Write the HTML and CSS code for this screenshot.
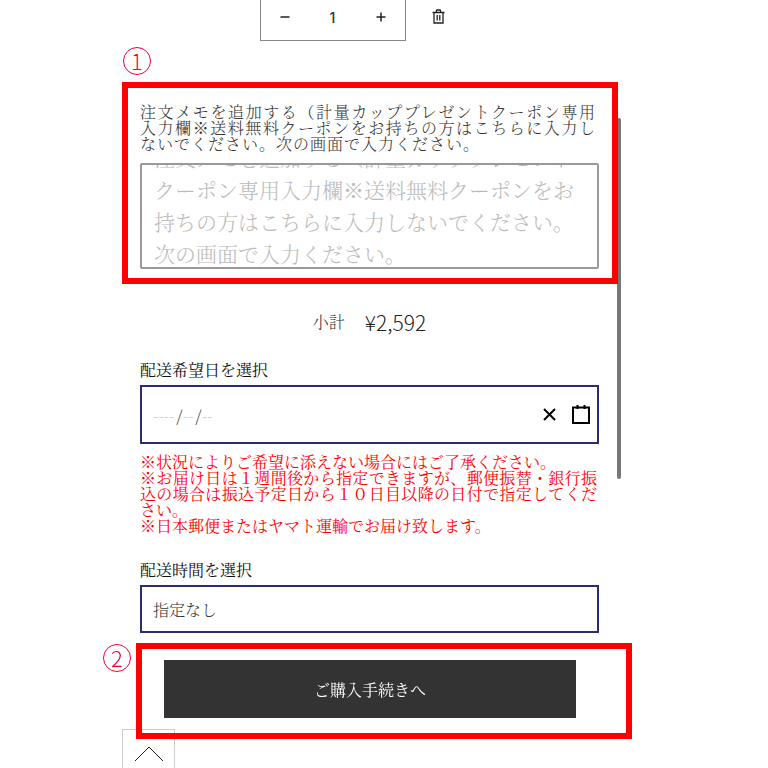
FILE: index.html
```html
<!DOCTYPE html>
<html lang="ja">

<head>
    <meta charset="UTF-8">
    <meta name="viewport" content="width=device-width, initial-scale=1.0">
    <title>カート</title>
    <link rel="stylesheet" href="styles.css">
</head>

<body>
    <main class="cart">
        <div class="cart-item">
            <div class="quantity">
                <button type="button" class="quantity-btn" aria-label="数量を減らす">
                    <svg width="10" height="10" viewBox="0 0 10 10"><path d="M0.5 5h9" /></svg>
                </button>
                <input class="quantity-input" type="text" value="1" aria-label="数量">
                <button type="button" class="quantity-btn" aria-label="数量を増やす">
                    <svg width="10" height="10" viewBox="0 0 10 10"><path d="M0.5 5h9M5 0.5v9" /></svg>
                </button>
            </div>
            <button type="button" class="remove-btn" aria-label="削除">
                <svg width="13" height="15" viewBox="0 0 13 15">
                    <path d="M0.5 3.5h12M4 3.5L4.8 1h3.4L9 3.5M2 3.5V14h9V3.5M5.2 6v5.5M7.8 6v5.5" />
                </svg>
            </button>
        </div>

        <!-- 注文メモ -->
        <section class="frame frame-note">
            <span class="badge badge-note">1</span>
            <label class="note-label" for="note">注文メモを追加する（計量カッププレゼントクーポン専用入力欄※送料無料クーポンをお持ちの方はこちらに入力しないでください。次の画面で入力ください。</label>
            <div class="note-box">
                <textarea class="note-input" id="note" placeholder="注文メモを追加する（計量カッププレゼントクーポン専用入力欄※送料無料クーポンをお持ちの方はこちらに入力しないでください。次の画面で入力ください。"></textarea>
            </div>
        </section>

        <section class="details">
            <div class="subtotal">
                <span class="subtotal-label">小計</span>
                <span class="subtotal-price">¥2,592</span>
            </div>

            <!-- 配送希望日 -->
            <label class="field-label" for="year">配送希望日を選択</label>
            <div class="field date-field">
                <input class="date-part year" id="year" type="text" placeholder="----">
                <span class="slash">/</span>
                <input class="date-part" type="text" placeholder="--" aria-label="月">
                <span class="slash">/</span>
                <input class="date-part" type="text" placeholder="--" aria-label="日">
                <div class="date-actions">
                    <button type="button" class="icon-btn" aria-label="クリア">
                        <svg width="13" height="13" viewBox="0 0 13 13"><path d="M1 1l11 11M12 1L1 12" /></svg>
                    </button>
                    <button type="button" class="icon-btn" aria-label="カレンダー">
                        <svg width="18" height="19" viewBox="0 0 18 19"><path d="M1 2.5h16V18H1zM5.5 0v4M12.5 0v4" /></svg>
                    </button>
                </div>
            </div>
            <p class="notice">
                ※状況によりご希望に添えない場合にはご了承ください。<br>
                ※お届け日は１週間後から指定できますが、郵便振替・銀行振込の場合は振込予定日から１０日目以降の日付で指定してください。<br>
                ※日本郵便またはヤマト運輸でお届け致します。
            </p>

            <!-- 配送時間 -->
            <label class="field-label" for="time">配送時間を選択</label>
            <select class="field time-select" id="time">
                <option>指定なし</option>
            </select>
        </section>

        <section class="frame frame-checkout">
            <span class="badge badge-checkout">2</span>
            <button type="submit" class="checkout-btn">ご購入手続きへ</button>
        </section>

        <div class="scroll-thumb"></div>
        <a class="page-top" href="#" aria-label="ページの先頭へ">
            <svg width="30" height="16" viewBox="0 0 30 16"><path d="M1 15L15 1l14 14" /></svg>
        </a>
    </main>
</body>

</html>
```

FILE: styles.css
```css
* {
    margin: 0;
    padding: 0;
    box-sizing: border-box;
}

body {
    background: #fff;
    color: #333;
    font-family: "Noto Serif CJK JP", "Noto Sans CJK JP", serif;
    font-size: 16px;
    font-weight: 300;
}

button,
input,
select,
textarea {
    font: inherit;
    color: inherit;
    background: none;
    border: none;
    border-radius: 0;
    outline: none;
}

button {
    cursor: pointer;
}

svg {
    display: block;
    fill: none;
    stroke: #222;
}

.cart {
    position: relative;
    padding: 0 150px 0 122px;
}

.cart-item {
    display: flex;
    justify-content: center;
    gap: 20px;
    padding-left: 100px;
    padding-right: 130px;
    height: 41px;
}

.quantity {
    display: grid;
    grid-template-columns: repeat(3, 48px);
    padding-bottom: 6px;
    border: 1px solid #888;
    border-top: none;
}

.quantity-btn {
    display: flex;
    align-items: center;
    justify-content: center;
}

.quantity-btn svg {
    stroke-width: 1.5;
}

.quantity-input {
    width: 48px;
    text-align: center;
    font-family: Inter, sans-serif;
    font-size: 14px;
    font-weight: 500;
}

.remove-btn {
    padding: 0 6px 8px;
}

.remove-btn svg {
    stroke-width: 1.3;
}

/* 赤枠 */
.frame {
    position: relative;
    z-index: 2;
    border: 6px solid #f00;
}

.frame-note {
    margin-top: 41px;
    padding: 16px 13px 9px 12px;
}

.frame-checkout {
    margin: 10px -14px 0 14px;
    padding: 11px 50px 15px 22px;
}

.badge {
    position: absolute;
    width: 28px;
    height: 28px;
    border: 1px solid #f0003c;
    border-radius: 50%;
    color: #f0003c;
    font-family: "Noto Sans CJK JP", sans-serif;
    font-size: 22px;
    line-height: 25px;
    text-align: center;
}

.badge-note {
    top: -41px;
    left: -5px;
}

.badge-checkout {
    top: -5px;
    left: -39px;
}

.note-label {
    display: block;
    padding-right: 3px;
    line-height: 16px;
    letter-spacing: 1px;
    text-align: justify;
}

.note-box {
    height: 106px;
    margin-top: 11px;
    border: 2px solid #999;
    border-radius: 2px;
    overflow: hidden;
}

.note-input {
    display: block;
    width: 100%;
    height: 128px;
    margin-top: -24px;
    padding: 0 12px;
    font-size: 21px;
    line-height: 32px;
    resize: none;
    overflow: hidden;
}

.note-input::placeholder {
    color: #bbb;
}

.details {
    padding: 0 19px 0 18px;
}

.subtotal {
    display: flex;
    align-items: center;
    justify-content: center;
    gap: 20px;
    margin-top: 22px;
    margin-bottom: 20px;
    line-height: 32px;
}

.subtotal-price {
    color: #222;
    font-family: "Noto Sans CJK JP", sans-serif;
    font-size: 21px;
}

.field-label {
    display: block;
    color: #111;
    font-weight: 400;
    line-height: 24px;
}

.field {
    width: 100%;
    margin-top: 3px;
    padding: 0 11px;
    border: 2px solid #2c2c70;
}

.date-field {
    display: flex;
    align-items: center;
    height: 59px;
    padding-right: 7px;
}

.date-part,
.slash {
    font-family: "Noto Sans CJK JP", sans-serif;
}

.date-part {
    width: 12px;
}

.date-part.year {
    width: 23px;
}

.date-part::placeholder {
    color: #ccc;
}

.slash {
    width: 7px;
    text-align: center;
}

.date-actions {
    display: flex;
    align-items: center;
    gap: 16px;
    margin-left: auto;
}

.icon-btn svg {
    stroke: #000;
    stroke-width: 2;
}

.notice {
    margin: 10px 0 24px;
    padding-right: 2px;
    color: #f00;
    font-weight: 400;
    line-height: 16px;
    text-align: justify;
}

.time-select {
    display: block;
    height: 48px;
    appearance: none;
}

.checkout-btn {
    display: block;
    width: 100%;
    height: 58px;
    background: #333;
    color: #fff;
    font-weight: 400;
}

.scroll-thumb {
    position: absolute;
    top: 118px;
    right: 147px;
    width: 4px;
    height: 361px;
    border-radius: 2px;
    background: #777;
}

.page-top {
    position: fixed;
    bottom: 0;
    left: 122px;
    display: flex;
    justify-content: center;
    width: 53px;
    height: 39px;
    padding-top: 16px;
    border: 1px solid #ccc;
    border-bottom: none;
    background: #fff;
}
```
